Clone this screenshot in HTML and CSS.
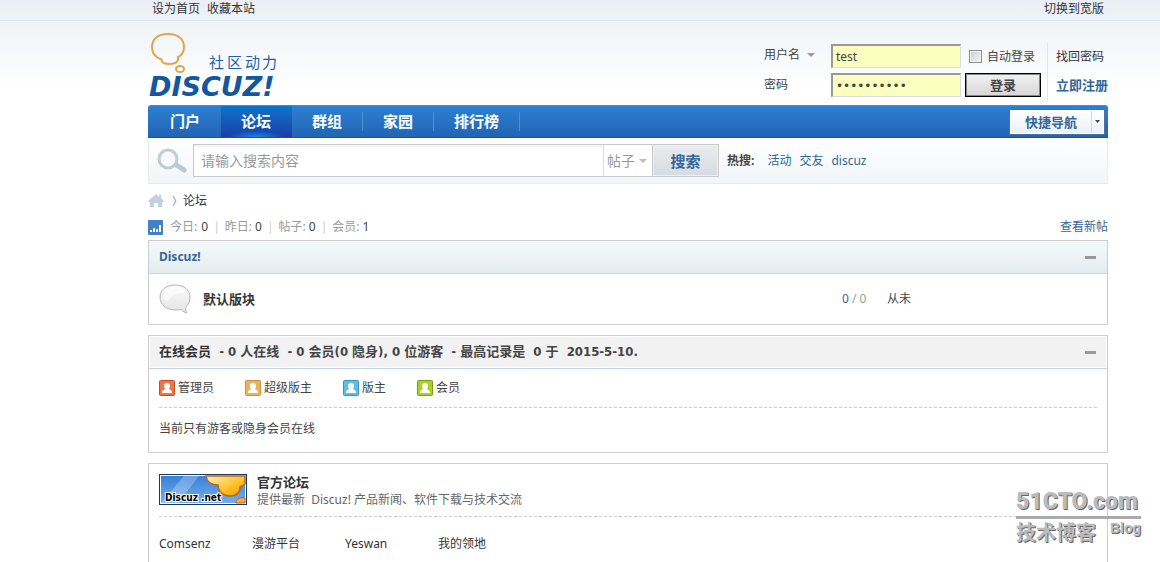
FILE: index.html
```html
<!DOCTYPE html>
<html lang="zh-CN">
<head>
<meta charset="utf-8">
<title>论坛 - Discuz!</title>
<link rel="stylesheet" href="styles.css">
</head>
<body>
<div class="page">
  <div class="topbar">
    <nav class="topbar-links"><a href="#">设为首页</a><a href="#">收藏本站</a></nav>
    <a href="#">切换到宽版</a>
  </div>

  <header class="header">
    <a class="logo" href="#" aria-label="Discuz! 社区动力">
      <svg width="130" height="70" viewBox="0 0 130 70">
        <path d="M13.500 27.500 C6 25 4 20 4 15 C4 7 10 2 20 2 C30 2 36 7 36 15 C36 20 34 23 30 25 C31 30 27 32 22 32 C17 32 13.500 31 13.500 27.500 Z" fill="none" stroke="#dfa650" stroke-width="2"/>
        <ellipse cx="32" cy="37" rx="4" ry="3" fill="none" stroke="#dfa650" stroke-width="2"/>
        <text class="logo-sub" x="61" y="36">社</text>
        <text class="logo-sub" x="79" y="36">区</text>
        <text class="logo-sub" x="97" y="36">动</text>
        <text class="logo-sub" x="114" y="36">力</text>
        <text class="logo-word" x="1" y="64">DISCUZ!</text>
      </svg>
    </a>
    <form class="login">
      <div class="login-labels">
        <span class="pick"><select aria-label="登录方式"><option>用户名</option><option>UID</option></select><svg class="caret" width="8" height="4" viewBox="0 0 8 4"><path d="M0 0h8L4 4z"/></svg></span>
        <label for="pw">密码</label>
      </div>
      <div class="login-fields">
        <input id="user" class="field" type="text" value="test" aria-label="用户名">
        <input id="pw" class="field" type="password" value="abcdefghij">
      </div>
      <div class="login-actions">
        <label class="auto"><input type="checkbox">自动登录</label>
        <button class="btn-login" type="button">登录</button>
      </div>
      <div class="login-links">
        <a href="#">找回密码</a>
        <a class="register" href="#">立即注册</a>
      </div>
    </form>
  </header>

  <nav class="mainnav">
    <a href="#">门户</a><a class="active" href="#">论坛</a><a class="split" href="#">群组</a><a class="split" href="#">家园</a><a class="split" href="#">排行榜</a>
    <button class="quick" type="button"><span>快捷导航</span><i><svg width="5" height="3" viewBox="0 0 5 3"><path d="M0 0h5L2.500 3z" fill="#444"/></svg></i></button>
  </nav>

  <form class="search">
    <svg class="lens" width="30" height="26" viewBox="0 0 30 26"><path d="M18 16L27 22" stroke="#b9c9d9" stroke-width="5" stroke-linecap="round"/><circle cx="11" cy="11" r="9" fill="#f7fafc" stroke="#bccddb" stroke-width="3"/></svg>
    <div class="search-box">
      <input type="text" placeholder="请输入搜索内容" aria-label="搜索">
      <span class="pick kind"><select aria-label="搜索范围"><option>帖子</option><option>用户</option></select><svg class="caret" width="8" height="4" viewBox="0 0 8 4"><path d="M0 0h8L4 4z"/></svg></span>
      <button type="button">搜索</button>
    </div>
    <div class="hot"><strong>热搜:</strong><a href="#">活动</a><a href="#">交友</a><a href="#">discuz</a></div>
  </form>

  <nav class="crumbs">
    <a href="#" aria-label="首页"><svg width="16" height="14" viewBox="0 0 16 14"><path d="M8 0L0 7l1 1h1v5h4V9h4v4h4V8h1l1-1-3-3V1h-2v2z" fill="#c1d0de"/></svg></a>
    <svg width="5" height="12" viewBox="0 0 5 12"><path d="M1 1l3 5-3 5" fill="none" stroke="#999"/></svg>
    <a href="#">论坛</a>
  </nav>

  <div class="stats">
    <svg width="15" height="15" viewBox="0 0 15 15"><rect width="15" height="15" rx="1" fill="#4181c9"/><path d="M2 10h2v2H2zM5 8h2v4H5zM8 9h2v3H8zM11 5h2v7h-2z" fill="#fff"/></svg>
    <ul><li>今日: <em>0</em></li><li>昨日: <em>0</em></li><li>帖子: <em>0</em></li><li>会员: <em>1</em></li></ul>
    <a href="#">查看新帖</a>
  </div>

  <main class="boxes">
    <section class="box">
      <h2 class="box-head blue"><a href="#">Discuz!</a><button type="button" aria-label="收起"></button></h2>
      <div class="forum">
        <svg width="32" height="30" viewBox="0 0 32 30"><defs><linearGradient id="g" x1="0" y1="0" x2="0" y2="1"><stop offset="0" stop-color="#fafafa"/><stop offset="1" stop-color="#e4e4e4"/></linearGradient></defs><path d="M16 1C7 1 1 6 1 13s6 13 15 13c2 0 4 0 6-1 1 2 3 3 6 4-1-2-2-4-1-6 3-3 4-6 4-10C31 6 25 1 16 1z" fill="url(#g)" stroke="#b5b5b5"/><path d="M4 14C4 7 10 3 16 3s10 3 11 6C20 9 13 10 9 17c-2 0-4-1-5-3z" fill="#fff" opacity=".6"/></svg>
        <a class="forum-name" href="#">默认版块</a>
        <span class="count"><b>0</b> / 0</span>
        <span class="last">从未</span>
      </div>
    </section>

    <section class="box online">
      <h2 class="box-head"><span><a href="#">在线会员</a>&nbsp; - 0 人在线&nbsp; - 0 会员(0 隐身), 0 位游客&nbsp; - 最高记录是&nbsp; 0 于&nbsp; 2015-5-10.</span><button type="button" aria-label="收起"></button></h2>
      <div class="box-body">
        <ul class="legend">
          <li><svg class="badge red" width="16" height="16" viewBox="0 0 16 16"><rect x=".5" y=".5" width="15" height="15" rx="1"/><path d="M8 3a3 3 0 0 0-3 3c0 2 1 2 1 3-1 1-3 1-3 4h10c0-3-2-3-3-4 0-1 1-1 1-3a3 3 0 0 0-3-3z"/></svg>管理员</li>
          <li><svg class="badge gold" width="16" height="16" viewBox="0 0 16 16"><rect x=".5" y=".5" width="15" height="15" rx="1"/><path d="M8 3a3 3 0 0 0-3 3c0 2 1 2 1 3-1 1-3 1-3 4h10c0-3-2-3-3-4 0-1 1-1 1-3a3 3 0 0 0-3-3z"/></svg>超级版主</li>
          <li><svg class="badge cyan" width="16" height="16" viewBox="0 0 16 16"><rect x=".5" y=".5" width="15" height="15" rx="1"/><path d="M8 3a3 3 0 0 0-3 3c0 2 1 2 1 3-1 1-3 1-3 4h10c0-3-2-3-3-4 0-1 1-1 1-3a3 3 0 0 0-3-3z"/></svg>版主</li>
          <li><svg class="badge green" width="16" height="16" viewBox="0 0 16 16"><rect x=".5" y=".5" width="15" height="15" rx="1"/><path d="M8 3a3 3 0 0 0-3 3c0 2 1 2 1 3-1 1-3 1-3 4h10c0-3-2-3-3-4 0-1 1-1 1-3a3 3 0 0 0-3-3z"/></svg>会员</li>
        </ul>
        <p class="nobody">当前只有游客或隐身会员在线</p>
      </div>
    </section>

    <section class="box links">
      <div class="box-body">
        <div class="partner">
          <svg width="88" height="31" viewBox="0 0 88 31">
            <defs><linearGradient id="sky" x1="0" y1="0" x2="0" y2="1"><stop offset="0" stop-color="#3b7fd6"/><stop offset="1" stop-color="#6fb0ec"/></linearGradient><linearGradient id="sun" x1="0" y1="0" x2="1" y2="1"><stop offset="0" stop-color="#fff0c8"/><stop offset=".6" stop-color="#ffc020"/><stop offset="1" stop-color="#f09a10"/></linearGradient></defs>
            <rect x=".5" y=".5" width="87" height="30" fill="#fff" stroke="#1c3a5c"/>
            <rect x="2" y="2" width="84" height="27" fill="url(#sky)"/>
            <path d="M25 2h15L19 29H2z" fill="#fff" opacity=".25"/>
            <path d="M47 2C48 9 53 11 59 11c0 6 5 11 12 11s11-5 10-9c2-1 4-2 5-3V2z" fill="url(#sun)" stroke="#b5651d" stroke-width="1.500"/>
            <path d="M77 29c0-4 4-6 9-5v5z" fill="#ffa845" stroke="#b5651d"/>
            <text class="banner-text" x="6" y="27">Discuz .net</text>
          </svg>
          <div><a class="partner-name" href="#">官方论坛</a><p>提供最新&nbsp; Discuz! 产品新闻、软件下载与技术交流</p></div>
        </div>
        <ul class="sites"><li><a href="#">Comsenz</a></li><li><a href="#">漫游平台</a></li><li><a href="#">Yeswan</a></li><li><a href="#">我的领地</a></li></ul>
      </div>
    </section>
  </main>
</div>

<div class="watermark">
  <div class="wm-top">51CTO.com</div>
  <div class="wm-bottom"><span>技术博客</span><span class="wm-blog">Blog</span></div>
</div>
</body>
</html>
```
FILE: styles.css
```css
* { box-sizing: border-box; }
body, h2, p, ul { margin: 0; padding: 0; }
ul { list-style: none; }
body {
  height: 100vh;
  overflow: hidden;
  color: #444;
  font: 12px/18px "Noto Sans", "Noto Sans CJK SC", sans-serif;
  background: #fff linear-gradient(#e9eff4, #fff) no-repeat 0 0 / 100% 88px;
}
a { color: #333; text-decoration: none; }
button, input, select { font: inherit; color: inherit; }
svg { display: block; flex: none; }

.page { height: 100%; display: flex; flex-direction: column; }
.page > * { flex: none; margin: 0 52px 0 148px; }

.page > .topbar {
  display: flex;
  justify-content: space-between;
  height: 21px;
  margin: 0;
  padding: 0 56px 0 152px;
  border-bottom: 1px solid #dde4e9;
}
.topbar-links { display: flex; gap: 7px; }

.header { display: flex; justify-content: space-between; height: 84px; }
.logo { padding-top: 11px; }
.logo svg { overflow: visible; }
.logo-sub { font: 15px "Noto Sans CJK SC", sans-serif; fill: #1c62a8; }
.logo-word { font: italic bold 27px "DejaVu Sans", sans-serif; fill: #1257a0; }

.login { display: flex; padding-top: 22px; height: 76px; }
.login-labels { display: flex; flex-direction: column; gap: 10px; width: 67px; padding-top: 2px; line-height: 20px; }
.pick { display: flex; align-items: center; gap: 7px; }
.pick select { appearance: none; padding: 0; border: 0; background: none; width: 36px; outline: 0; }
.caret { fill: #999; pointer-events: none; }
.login-fields { display: flex; flex-direction: column; gap: 5px; width: 130px; margin-right: 4px; padding-top: 1px; }
.field {
  width: 100%;
  height: 24px;
  padding: 0 3px;
  background: #faffbd;
  border: 1px solid #ddd;
  border-top: 2px solid #999;
  border-left: 2px solid #999;
}
.field[type="password"] { font-family: "DejaVu Sans", sans-serif; }
.login-actions { display: flex; flex-direction: column; gap: 7px; width: 76px; padding-top: 4px; }
.auto { display: flex; align-items: center; gap: 5px; padding-left: 4px; height: 19px; }
.auto input {
  appearance: none;
  width: 13px;
  height: 13px;
  margin: 0;
  border: 1px solid #8e8f8f;
  background: linear-gradient(135deg, #c8ccd0, #f6f6f6);
  box-shadow: inset 0 0 0 1px #f4f4f4;
}
.btn-login {
  height: 24px;
  padding: 0;
  font-size: 13px;
  font-weight: bold;
  border: 1px solid #000;
  background: linear-gradient(#f2f2f2, #d6d6d6);
  box-shadow: inset 0 0 0 1px #888;
}
.login-links {
  display: flex;
  flex-direction: column;
  gap: 8px;
  height: 58px;
  margin-left: 6px;
  padding: 4px 0 0 8px;
  line-height: 20px;
  border-left: 1px solid #e1e6ea;
}
.login-links .register { color: #369; font-size: 13px; font-weight: bold; }

.mainnav {
  display: flex;
  align-items: center;
  height: 33px;
  padding: 0 4px 0 2px;
  border-top: 1px solid #4a8cc0;
  border-bottom: 1px solid #1e5494;
  border-radius: 3px 3px 0 0;
  background: linear-gradient(#2c80d3, #2264b4);
}
.mainnav a {
  height: 31px;
  padding: 0 20px;
  color: #fff;
  font-size: 15px;
  font-weight: bold;
  line-height: 31px;
  border-right: 1px solid transparent;
}
.mainnav .active {
  background: radial-gradient(ellipse 28px 6px at 50% 100%, #1488f0, transparent), linear-gradient(#0c75cb, #1b3fa8);
}
.mainnav .split { border-image: linear-gradient(transparent 20%, #4a8fd5 20%, #4a8fd5 80%, transparent 80%) 1; }
.quick {
  display: flex;
  align-items: center;
  height: 24px;
  margin-left: auto;
  padding: 0;
  color: #369;
  font-size: 13px;
  font-weight: bold;
  border: 1px solid #fff;
  background: linear-gradient(#fff, #eaf1fb);
  box-shadow: 0 0 0 1px #4d7199;
}
.quick span { padding: 0 14px; }
.quick i { display: flex; align-items: center; height: 22px; padding: 0 3px; border-left: 1px solid #cfd9e6; }

.search {
  display: flex;
  align-items: center;
  height: 46px;
  padding-left: 8px;
  border: 1px solid #e4ecf2;
  border-top: 0;
  background: linear-gradient(#fff, #f2f6f8);
}
.search-box {
  display: flex;
  width: 526px;
  height: 33px;
  margin: 0 8px 0 6px;
  border: 1px solid #c9c9c9;
  background: #fff;
}
.search-box input { flex: 1; min-width: 0; padding: 0 7px; font-size: 14px; border: 0; outline: 0; background: none; box-shadow: inset 0 2px 2px #f3f3f3; }
.search-box input::placeholder { color: #999; opacity: 1; }
.kind { width: 49px; gap: 4px; padding-left: 3px; color: #999; font-size: 14px; border-left: 1px solid #ddd; }
.kind select { width: 28px; }
.kind .caret { fill: #bbb; }
.search-box button {
  width: 66px;
  color: #369;
  font-size: 15px;
  font-weight: bold;
  border: 0;
  border-left: 1px solid #c9c9c9;
  background: linear-gradient(#e9ecef, #d5dbe2);
  box-shadow: inset 0 0 0 1px #eef1f4;
}
.hot { display: flex; gap: 8px; }
.hot strong { margin-right: 5px; }
.hot a { color: #369; }

.crumbs { display: flex; align-items: center; gap: 8px; height: 33px; }
.crumbs svg + a { margin-left: -2px; }

.stats { display: flex; align-items: center; height: 20px; color: #999; }
.stats ul { display: flex; flex: 1; margin-left: 7px; }
.stats li + li { display: flex; gap: 3px; }
.stats li:first-child em { margin-left: 1px; }
.stats li + li::before { content: "|"; margin: 0 2px 0 5px; color: #ccc; line-height: 17px; }
.stats em { color: #444; font-style: normal; }
.stats > a { color: #369; }

.boxes { display: flex; flex-direction: column; gap: 10px; }
.page > .boxes { margin-top: 3px; }
.box { border: 1px solid #cdcdcd; background: #fff; }
.box-head {
  display: flex;
  align-items: center;
  justify-content: space-between;
  height: 33px;
  padding: 0 11px 0 10px;
  font-family: "DejaVu Sans Condensed", "Noto Sans CJK SC", sans-serif;
  font-size: 13px;
  border-bottom: 1px solid #c2d5e3;
  background: #f2f2f2;
  box-shadow: inset 0 0 0 1px #fff;
}
.box-head.blue { font-family: inherit; font-size: 12px; background: linear-gradient(#f4f8fa, #e5edf2); box-shadow: none; }
.box-head.blue a { color: #369; }
.box-head button { width: 11px; height: 3px; padding: 0; border: 0; background: #999; }
.forum { display: flex; align-items: center; height: 50px; padding: 0 10px; }
.forum-name { flex: 1; margin-left: 12px; font-size: 13px; font-weight: bold; }
.count { width: 45px; color: #999; }
.count b { color: #369; font-weight: normal; }
.last { width: 210px; }
.box-body { padding: 0 10px; }
.legend { display: flex; gap: 31px; height: 39px; align-items: center; border-bottom: 1px dashed #cdcdcd; }
.legend li { display: flex; align-items: center; gap: 3px; }
.nobody { padding: 12px 0 14px; }
.badge path { fill: #fff; }
.red rect { fill: #ee7644; stroke: #c24f24; }
.gold rect { fill: #e8b45c; stroke: #c4924a; }
.cyan rect { fill: #5cc0e4; stroke: #3a95b8; }
.green rect { fill: #a8d420; stroke: #76a010; }

.partner { display: flex; gap: 10px; height: 53px; padding-top: 10px; border-bottom: 1px dashed #cdcdcd; }
.partner p { color: #666; line-height: 20px; }
.partner-name { display: block; font-size: 13px; font-weight: bold; line-height: 16px; }
.banner-text { font: bold 10px "DejaVu Sans Condensed", sans-serif; fill: #000; stroke: #fff; stroke-width: 2px; paint-order: stroke; }
.sites { display: flex; padding: 18px 0; }
.sites li { width: 93px; }

.watermark { position: absolute; right: 19px; bottom: 18px; width: 125px; color: #bbb; text-shadow: 1px 1px 0 #666; font-weight: bold; }
.wm-top { font: 900 23px/28px Roboto, sans-serif; border-bottom: 3px solid #aaa; white-space: nowrap; }
.wm-bottom { display: flex; justify-content: space-between; font: bold 20px/25px "Noto Sans CJK SC", sans-serif; }
.wm-blog { font: bold 14px/18px "Liberation Sans", sans-serif; }
```
